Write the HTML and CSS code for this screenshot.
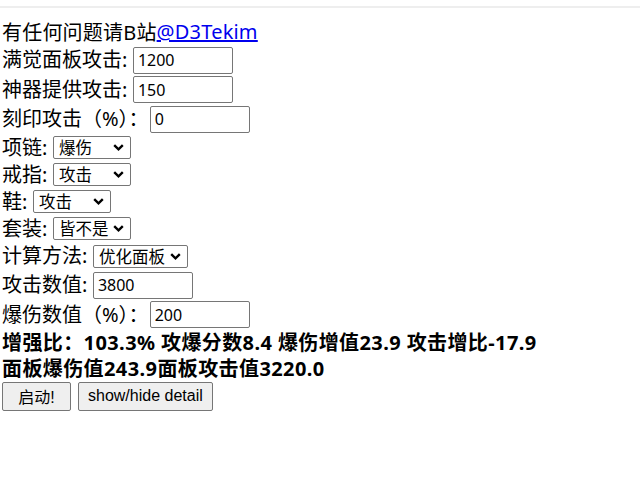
FILE: index.html
```html
<!DOCTYPE html>
<html lang="zh-CN">
<head>
<meta charset="utf-8">
<title>增强比计算</title>
<link rel="stylesheet" href="styles.css">
</head>
<body>
<div class="topbar"></div>
<main class="page">
  <div class="row r-text">有任何问题请B站<a class="link" href="#">@D3Tekim</a></div>
  <div class="row r-in"><span class="lbl">满觉面板攻击:</span><input class="num" type="text" value="1200"></div>
  <div class="row r-in"><span class="lbl">神器提供攻击:</span><input class="num" type="text" value="150"></div>
  <div class="row r-in"><span class="lbl">刻印攻击（%）：</span><input class="num pct" type="text" value="0"></div>
  <div class="row r-sel"><span class="lbl">项链:</span><select class="sel"><option>爆伤</option><option>攻击</option><option>皆不是</option></select></div>
  <div class="row r-sel"><span class="lbl">戒指:</span><select class="sel"><option>攻击</option><option>爆伤</option><option>皆不是</option></select></div>
  <div class="row r-sel"><span class="lbl">鞋:</span><select class="sel"><option>攻击</option><option>爆伤</option><option>皆不是</option></select></div>
  <div class="row r-sel"><span class="lbl">套装:</span><select class="sel sel-tight"><option>皆不是</option><option>攻击</option><option>爆伤</option></select></div>
  <div class="row r-sel2"><span class="lbl">计算方法:</span><select class="sel sel-wide"><option>优化面板</option><option>优化数值</option></select></div>
  <div class="row r-in"><span class="lbl">攻击数值:</span><input class="num" type="text" value="3800"></div>
  <div class="row r-in"><span class="lbl">爆伤数值（%）：</span><input class="num pct" type="text" value="200"></div>
  <div class="result">
    <div class="res-line">增强比：103.3% 攻爆分数8.4 爆伤增值23.9 攻击增比-17.9</div>
    <div class="res-line">面板爆伤值243.9面板攻击值3220.0</div>
  </div>
  <div class="actions">
    <button class="btn btn-go" type="button">启动!</button>
    <button class="btn" type="button">show/hide detail</button>
  </div>
</main>
</body>
</html>
```
FILE: styles.css
```css
html, body {
  margin: 0;
  padding: 0;
  background: #ffffff;
}
body {
  font-family: "Noto Sans", "Noto Sans CJK SC", sans-serif;
  font-size: 20px;
  color: #000000;
}
.topbar {
  margin-top: 6px;
  height: 2px;
  background: #eeeeee;
}
.page {
  padding: 10px 0 0 2px;
  display: flex;
  flex-direction: column;
}
.row {
  display: flex;
  align-items: center;
  white-space: nowrap;
}
.r-text { height: 27.5px; letter-spacing: 0.2px; }
.r-in { height: 29.5px; }
.r-sel { height: 27px; }
.r-sel2 { height: 28.5px; }
.link {
  color: #0000ee;
  text-decoration: underline;
}
.lbl {
  line-height: 26px;
}
.num {
  box-sizing: border-box;
  width: 100px;
  height: 27px;
  margin: 0 0 0 5.5px;
  padding: 1px 4px;
  border: 1px solid #767676;
  border-radius: 2px;
  font-family: "Noto Sans", "Noto Sans CJK SC", sans-serif;
  font-size: 16px;
  color: #000000;
  background: #ffffff;
}
.num.pct { margin-left: 1px; }
.sel {
  -webkit-appearance: none;
  appearance: none;
  box-sizing: border-box;
  width: 78px;
  height: 23px;
  margin: 0 0 0 5.5px;
  padding: 0 0 0 5px;
  border: 1px solid #767676;
  border-radius: 2px;
  font-family: "Noto Sans CJK SC", sans-serif;
  font-size: 16.5px;
  line-height: 21px;
  color: #000000;
  background-color: #ffffff;
  background-image: url("data:image/svg+xml,%3Csvg xmlns='http://www.w3.org/2000/svg' width='11' height='7' viewBox='0 0 11 7'%3E%3Cpath d='M1.2 1.2 L5.5 5.3 L9.8 1.2' fill='none' stroke='%23000' stroke-width='2.4'/%3E%3C/svg%3E");
  background-repeat: no-repeat;
  background-position: right 6px center;
  background-size: 11px 7px;
}
.sel-tight { padding-left: 5px; }
.sel-wide { width: 95px; }
.result {
  font-weight: bold;
  padding-top: 0;
}
.res-line {
  height: 26px;
  line-height: 26px;
  white-space: nowrap;
  letter-spacing: 0.4px;
}
.actions {
  display: flex;
  gap: 7px;
}
.btn {
  box-sizing: border-box;
  height: 29px;
  margin: 0;
  padding: 0 9px;
  border: 1px solid #767676;
  border-radius: 2px;
  background: #efefef;
  font-family: "Liberation Sans", "Noto Sans CJK SC", sans-serif;
  font-size: 16px;
  color: #000000;
}
.btn-go {
  width: 69px;
  padding: 0;
}
```
